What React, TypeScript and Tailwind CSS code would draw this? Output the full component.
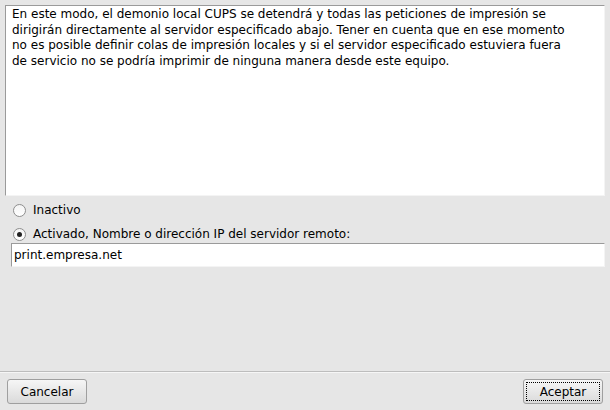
import { useState } from "react";

const font = { fontFamily: '"DejaVu Sans", Verdana, sans-serif' };

const info = [
  "En este modo, el demonio local CUPS se detendrá y todas las peticiones de impresión se",
  "dirigirán directamente al servidor especificado abajo. Tener en cuenta que en ese momento",
  "no es posible definir colas de impresión locales y si el servidor especificado estuviera fuera",
  "de servicio no se podría imprimir de ninguna manera desde este equipo.",
];

function Radio({ checked, label, onClick }: { checked: boolean; label: string; onClick: () => void }) {
  return (
    <label className="flex items-center h-[16px] cursor-default" onClick={onClick}>
      <span className="ml-[13px] w-[13px] h-[13px] rounded-full border border-[#8e8e8e] bg-gradient-to-b from-[#f4f4f4] to-white flex items-center justify-center">
        {checked && <span className="w-[5px] h-[5px] rounded-full bg-[#222]" />}
      </span>
      <span className="ml-[7px] text-[12px] text-black">{label}</span>
    </label>
  );
}

export default function App() {
  const [mode, setMode] = useState<"off" | "on">("on");

  return (
    <div className="w-[610px] h-[410px] bg-[#e6e6e6] flex flex-col overflow-hidden" style={font}>
      <div className="mx-[5px] mt-[5px] h-[191px] bg-white border border-t-[#9a9a9a] border-l-[#9a9a9a] border-r-[#f4f4f4] border-b-[#f4f4f4] px-[6px] pt-[1px] text-[12px] leading-[15.6px] text-black">
        {info.map((line) => (
          <div key={line} className="whitespace-nowrap">
            {line}
          </div>
        ))}
      </div>

      <div className="mt-[6px] flex flex-col gap-[8px]">
        <Radio checked={mode === "off"} label="Inactivo" onClick={() => setMode("off")} />
        <Radio
          checked={mode === "on"}
          label="Activado, Nombre o dirección IP del servidor remoto:"
          onClick={() => setMode("on")}
        />
      </div>

      <div className="ml-[11px] mr-[5px] mt-[1px] h-[24px] bg-white border border-t-[#9a9a9a] border-l-[#9a9a9a] border-r-[#f4f4f4] border-b-[#f4f4f4] flex items-center px-[2px] text-[12px] text-black">
        print.empresa.net
      </div>

      <div className="flex-1" />

      <div className="h-px bg-[#bdbdbd]" />
      <div className="h-px bg-[#f6f6f6]" />

      <div className="flex justify-between px-[7px] pt-[6px] pb-[6px]">
        <button className="w-[80px] h-[25px] rounded-[3px] border border-[#9f9f9f] bg-gradient-to-b from-[#f6f6f6] to-[#dadada] text-[12px] text-black">
          Cancelar
        </button>
        <button className="w-[80px] h-[25px] rounded-[3px] border border-[#9f9f9f] bg-gradient-to-b from-[#f6f6f6] to-[#dadada] text-[12px] text-black p-[2px]">
          <span className="flex w-full h-full items-center justify-center border border-dotted border-black">
            Aceptar
          </span>
        </button>
      </div>
    </div>
  );
}
